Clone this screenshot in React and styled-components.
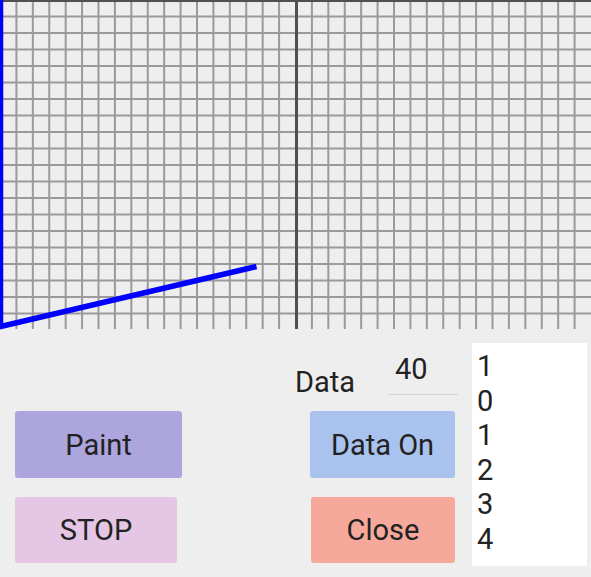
import React from "react";
import styled, { createGlobalStyle } from "styled-components";

const Global = createGlobalStyle`
  html, body { margin: 0; padding: 0; background: #eeeeee; }
  body { font-family: Roboto, "Noto Sans", sans-serif; color: #222; }
  * { box-sizing: border-box; }
`;

const Page = styled.div`
  width: 591px;
  height: 577px;
  display: flex;
  flex-direction: column;
  background: #eeeeee;
  overflow: hidden;
`;

const ChartSvg = styled.svg`
  display: block;
  width: 591px;
  height: 330px;
  flex: none;
`;

const Panel = styled.div`
  display: flex;
  align-items: flex-start;
  height: 247px;
  padding-top: 13px;
`;

const LeftCol = styled.div`
  margin-left: 15px;
  width: 167px;
  padding-top: 68px;
  display: flex;
  flex-direction: column;
  align-items: flex-start;
  gap: 19px;
`;

const MidCol = styled.div`
  margin-left: 113px;
  width: 163px;
  display: flex;
  flex-direction: column;
  align-items: flex-start;
`;

const DataRow = styled.div`
  display: flex;
  align-items: flex-start;
  height: 68px;
`;

const Label = styled.span`
  width: 93px;
  margin-top: 25px;
  font-size: 29px;
  line-height: 28px;
`;

const Field = styled.input`
  width: 70px;
  margin: 12px 0 0 0;
  padding: 0 0 10px 7px;
  border: none;
  border-bottom: 1.5px solid #d4d4d4;
  background: transparent;
  font-family: Roboto, "Noto Sans", sans-serif;
  font-size: 29px;
  line-height: 28px;
  height: 39.5px;
  color: #222;
  outline: none;
`;

const MidButtons = styled.div`
  display: flex;
  flex-direction: column;
  gap: 19px;
`;

const Btn = styled.button`
  width: ${(p) => p.$w}px;
  height: ${(p) => p.$h}px;
  margin-left: ${(p) => p.$ml || 0}px;
  background: ${(p) => p.$bg};
  border: none;
  border-radius: 3px;
  padding: 0;
  font-family: Roboto, "Noto Sans", sans-serif;
  font-size: 29px;
  color: #222;
  display: flex;
  align-items: center;
  justify-content: center;
`;

const ListBox = styled.div`
  margin-left: 14px;
  width: 115px;
  height: 223px;
  background: #ffffff;
  padding: 6px 0 0 5px;
  font-size: 29px;
  line-height: 34.5px;
  overflow: hidden;
`;

const ListItem = styled.div``;

function Chart() {
  const W = 591;
  const H = 330;
  const vx = [];
  for (let i = 1; i < 36; i++) if (i !== 18) vx.push((i * W) / 36);
  const hy = [];
  for (let j = 1; j < 20; j++) hy.push(j * 16.5);
  return (
    <ChartSvg viewBox={`0 0 ${W} ${H}`}>
      <rect x="0" y="0" width={W} height={H} fill="#eeeeee" />
      {vx.map((x) => (
        <line key={"v" + x} x1={x} y1="0" x2={x} y2="329" stroke="#9a9a9a" strokeWidth="2" />
      ))}
      {hy.map((y) => (
        <line key={"h" + y} x1="0" y1={y} x2={W} y2={y} stroke="#9a9a9a" strokeWidth="2" />
      ))}
      <rect x="0" y="0" width={W} height="2" fill="#505050" />
      <rect x="295" y="0" width="3" height="329" fill="#505050" />
      <polyline
        points="0.5,0 0.5,326.5 256.5,266.5"
        fill="none"
        stroke="#0000ff"
        strokeWidth="5.5"
        strokeLinejoin="round"
      />
    </ChartSvg>
  );
}

export default function App() {
  const items = ["1", "0", "1", "2", "3", "4"];
  return (
    <Page>
      <Global />
      <Chart />
      <Panel>
        <LeftCol>
          <Btn $w={167} $h={67} $bg="#ada5de">Paint</Btn>
          <Btn $w={162} $h={66} $bg="#e6c6e5">STOP</Btn>
        </LeftCol>
        <MidCol>
          <DataRow>
            <Label>Data</Label>
            <Field readOnly defaultValue="40" />
          </DataRow>
          <MidButtons>
            <Btn $w={145} $h={67} $ml={15} $bg="#a9c2ee">Data On</Btn>
            <Btn $w={144} $h={66} $ml={16} $bg="#f6a99b">Close</Btn>
          </MidButtons>
        </MidCol>
        <ListBox>
          {items.map((t, i) => (
            <ListItem key={i}>{t}</ListItem>
          ))}
        </ListBox>
      </Panel>
    </Page>
  );
}
